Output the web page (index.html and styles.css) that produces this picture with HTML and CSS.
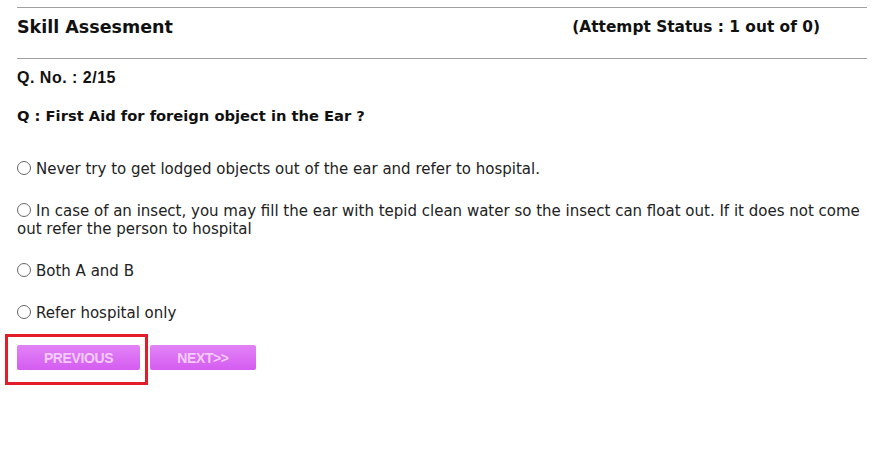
FILE: index.html
```html
<!DOCTYPE html>
<html>
<head>
<meta charset="utf-8">
<link rel="stylesheet" href="styles.css">
</head>
<body>
<div class="page">
  <div class="header">
    <h1 class="title">Skill Assesment</h1>
    <div class="status">(Attempt Status : 1 out of 0)</div>
  </div>
  <div class="qno">Q. No. : 2/15</div>
  <div class="question">Q : First Aid for foreign object in the Ear ?</div>
  <div class="options">
    <label class="option"><span class="radio"></span>Never try to get lodged objects out of the ear and refer to hospital.</label>
    <label class="option"><span class="radio"></span>In case of an insect, you may fill the ear with tepid clean water so the insect can float out. If it does not come out refer the person to hospital</label>
    <label class="option"><span class="radio"></span>Both A and B</label>
    <label class="option"><span class="radio"></span>Refer hospital only</label>
  </div>
  <div class="buttons">
    <div class="marked">
      <button class="btn btn-prev">PREVIOUS</button>
      <div class="highlight"></div>
    </div>
    <button class="btn btn-next">NEXT&gt;&gt;</button>
  </div>
</div>
</body>
</html>
```
FILE: styles.css
```css
html, body { margin: 0; padding: 0; background: #fff; }
.page {
  width: 850px;
  margin-left: 17px;
  padding-top: 7px;
  min-height: 440px;
  color: #111;
  font-family: "DejaVu Sans", Verdana, sans-serif;
}
.header {
  display: flex;
  justify-content: space-between;
  align-items: center;
  border-top: 1px solid #a0a0a0;
  border-bottom: 1px solid #a0a0a0;
  height: 52px;
  box-sizing: border-box;
  padding-bottom: 12px;
}
.title {
  margin: 0;
  font-size: 17.5px;
  font-weight: bold;
  font-family: "DejaVu Sans", Verdana, sans-serif;
}
.status {
  font-size: 15.4px;
  font-weight: bold;
  padding-right: 47px;
}
.qno {
  font-family: "Liberation Sans", Arial, sans-serif;
  font-weight: bold;
  font-size: 16px;
  letter-spacing: 0.5px;
  margin-top: 10px;
  line-height: 18px;
}
.question {
  font-weight: bold;
  font-size: 14.7px;
  margin-top: 20px;
  line-height: 18px;
}
.options {
  display: flex;
  flex-direction: column;
  gap: 24px;
  margin-top: 35px;
}
.option {
  display: block;
  font-size: 15px;
  line-height: 18px;
  color: #222;
}
.radio {
  display: inline-block;
  width: 12px;
  height: 12px;
  border: 1px solid #666;
  border-radius: 50%;
  margin-right: 5px;
  vertical-align: -1px;
}
.buttons {
  display: flex;
  gap: 10px;
  margin-top: 23px;
}
.marked {
  position: relative;
  display: flex;
}
.btn {
  height: 25px;
  border: none;
  border-radius: 2px;
  background: linear-gradient(#e283f6, #d55cf1);
  color: #f4ccff;
  font-family: "Liberation Sans", Arial, sans-serif;
  font-size: 14px;
  font-weight: bold;
  padding: 0;
  letter-spacing: -0.4px;
}
.btn-prev { width: 123px; }
.btn-next { width: 106px; }
.highlight {
  position: absolute;
  left: -12px;
  top: -11px;
  width: 137px;
  height: 45px;
  border: 3px solid #e21d2a;
  pointer-events: none;
}
```
